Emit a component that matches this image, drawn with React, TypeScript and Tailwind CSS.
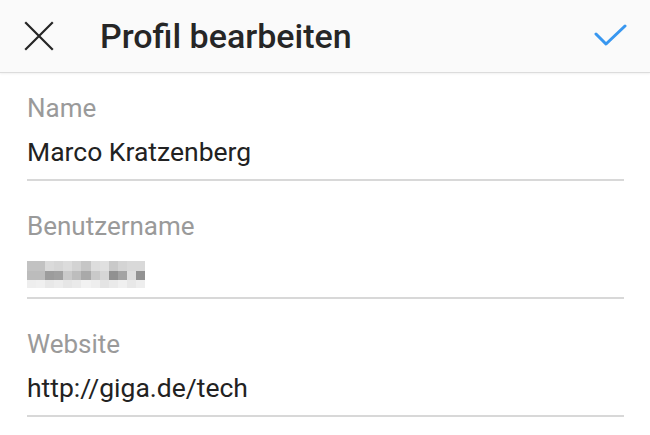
import React from "react";

const top = ["bg-[#c2c2c2]","bg-[#c2c2c2]","bg-[#dadada]","bg-[#d6d6d6]","bg-[#dcdcdc]","bg-[#d3d3d3]","bg-[#c6c6c6]","bg-[#dddddd]","bg-[#e0e0e0]","bg-[#c9c9c9]","bg-[#d4d4d4]","bg-[#d9d9d9]","bg-[#d9d9d9]"];
const mid = ["bg-[#bcbcbc]","bg-[#bcbcbc]","bg-[#9c9c9c]","bg-[#a0a0a0]","bg-[#cacaca]","bg-[#bdbdbd]","bg-[#a9a9a9]","bg-[#c9c9c9]","bg-[#d6d6d6]","bg-[#919191]","bg-[#a3a3a3]","bg-[#dedede]","bg-[#929292]"];
const bot = ["bg-[#eeeeee]","bg-[#f0f0f0]","bg-[#e8e8e8]","bg-[#ececec]","bg-[#e6e6e6]","bg-[#eaeaea]","bg-[#f2f2f2]","bg-[#eeeeee]","bg-[#e4e4e4]","bg-[#eaeaea]","bg-[#f0f0f0]","bg-[#e8e8e8]","bg-[#eeeeee]"];

function Pixelated() {
  return (
    <div className="h-[32px] pt-[7px]">
      <div className="flex flex-col w-[118px] blur-[0.6px]">
        <div className="flex h-[10px]">{top.map((c, i) => <div key={i} className={`w-[9.1px] ${c}`} />)}</div>
        <div className="flex h-[9px]">{mid.map((c, i) => <div key={i} className={`w-[9.1px] ${c}`} />)}</div>
        <div className="flex h-[8px]">{bot.map((c, i) => <div key={i} className={`w-[9.1px] ${c}`} />)}</div>
      </div>
    </div>
  );
}

function Field({ label, value, first }: { label: string; value: React.ReactNode; first?: boolean }) {
  return (
    <div className={first ? "" : "mt-[31px]"}>
      <div className="text-[26px] leading-[28px] text-[#9a9a9a]">{label}</div>
      <div className="mt-[14px] text-[26.5px] leading-[32px] text-[#222222]">{value}</div>
      <div className="mt-[11px] h-[2px] bg-[#d8d8d8]" />
    </div>
  );
}

export default function App() {
  return (
    <div className="w-[650px] h-[435px] bg-white overflow-hidden" style={{ fontFamily: "Roboto, 'Noto Sans', sans-serif" }}>
      <header className="h-[73px] bg-[#fafafa] border-b border-[#dcdcdc] flex items-center relative shadow-[0_1px_2px_rgba(0,0,0,0.06)]">
        <div className="w-[100px] flex items-center pl-[24px]">
          <svg width="30" height="30" viewBox="0 0 30 30" fill="none" stroke="#262626" strokeWidth="2.2" strokeLinecap="square">
            <path d="M2 2 L28 28 M28 2 L2 28" />
          </svg>
        </div>
        <div className="text-[34px] leading-[40px] font-medium text-[#262626] -mt-[1px]">Profil bearbeiten</div>
        <div className="ml-auto pr-[22px] flex items-center">
          <svg width="34" height="26" viewBox="0 0 34 26" fill="none" stroke="#3897f0" strokeWidth="3" strokeLinecap="round" strokeLinejoin="round">
            <path d="M2 11 L12 21 L31 3" />
          </svg>
        </div>
      </header>
      <main className="pl-[27px] pr-[26px] pt-[21px]">
        <Field first label="Name" value="Marco Kratzenberg" />
        <Field label="Benutzername" value={<Pixelated />} />
        <Field label="Website" value="http://giga.de/tech" />
      </main>
    </div>
  );
}
